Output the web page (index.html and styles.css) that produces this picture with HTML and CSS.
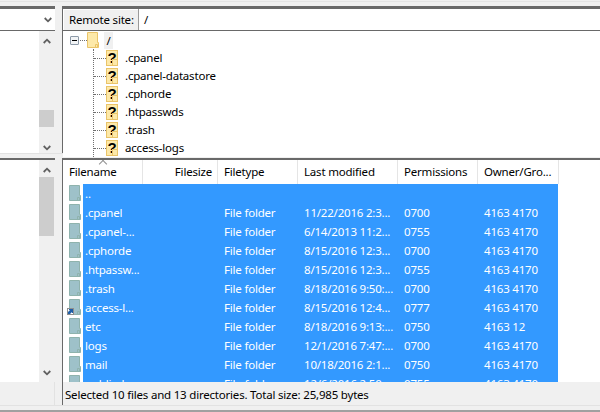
FILE: index.html
```html
<!DOCTYPE html>
<html>
<head>
<meta charset="utf-8">
<title>Remote site</title>
<link rel="stylesheet" href="styles.css">
</head>
<body>
<svg class="defs" width="0" height="0">
  <symbol id="folder" viewBox="0 0 12 16"><path d="M.5.5H10.5V10.5H11.5V15.5H.5Z" fill="#fde9a9" stroke="#eac469"/><path d="M8.5 12.5H10.5V15.5H8.5Z" fill="#fde9a9" stroke="#eac469"/></symbol>
  <symbol id="selfolder" viewBox="0 0 12 16"><path d="M.5.5H10.5V10.5H11.5V15.5H.5Z" fill="#9ec1c9" stroke="#8fb3ad"/><path d="M8.5 12.5H10.5V15.5H8.5Z" fill="#9ec1c9" stroke="#8fb3ad"/></symbol>
  <symbol id="chev" viewBox="0 0 8 6"><path d="M.7 1L4 4.3L7.3 1" fill="none" stroke="#606060" stroke-width="1.8"/></symbol>
  <symbol id="chevup" viewBox="0 0 8 6"><path d="M.7 5L4 1.7L7.3 5" fill="none" stroke="#606060" stroke-width="1.8"/></symbol>
</svg>
<div class="app">
  <div class="strip strip-top"></div>
  <div class="panes panes-top">
    <section class="left-pane">
      <div class="combo"><svg class="combo-chev"><use href="#chev"/></svg></div>
      <div class="left-body">
        <div class="blank"></div>
        <div class="scrollbar">
          <svg class="sb-arrow"><use href="#chevup"/></svg>
          <div class="track track-a"><div class="thumb thumb-a"></div></div>
          <svg class="sb-arrow"><use href="#chev"/></svg>
        </div>
      </div>
    </section>
    <section class="right-pane">
      <div class="site-bar">
        <div class="site-label">Remote site:</div>
        <div class="site-path">/</div>
      </div>
      <div class="tree">
        <div class="vline"></div>
        <div class="tree-root">
          <span class="expander"></span>
          <span class="hdots short"></span>
          <svg class="ico"><use href="#folder"/></svg>
          <span class="root-name">/</span>
        </div>
        <div class="tree-row"><span class="hdots"></span><span class="q">?</span><span class="tree-name">.cpanel</span></div>
        <div class="tree-row"><span class="hdots"></span><span class="q">?</span><span class="tree-name">.cpanel-datastore</span></div>
        <div class="tree-row"><span class="hdots"></span><span class="q">?</span><span class="tree-name">.cphorde</span></div>
        <div class="tree-row"><span class="hdots"></span><span class="q">?</span><span class="tree-name">.htpasswds</span></div>
        <div class="tree-row"><span class="hdots"></span><span class="q">?</span><span class="tree-name">.trash</span></div>
        <div class="tree-row"><span class="hdots"></span><span class="q">?</span><span class="tree-name">access-logs</span></div>
      </div>
    </section>
  </div>
  <div class="strip strip-mid"></div>
  <div class="panes panes-bottom">
    <section class="left-pane">
      <div class="left-body">
        <div class="blank"></div>
        <div class="scrollbar">
          <svg class="sb-arrow"><use href="#chevup"/></svg>
          <div class="track track-b"><div class="thumb thumb-b"></div></div>
          <svg class="sb-arrow"><use href="#chev"/></svg>
        </div>
      </div>
      <div class="left-status"></div>
    </section>
    <section class="right-pane">
      <div class="list">
        <div class="row head">
          <span class="c-name">Filename<i class="sort"></i></span>
          <span class="c-size">Filesize</span>
          <span class="c-type">Filetype</span>
          <span class="c-date">Last modified</span>
          <span class="c-perm">Permissions</span>
          <span class="c-own">Owner/Gro...</span>
        </div>
        <div class="rows">
          <div class="row"><svg class="ico"><use href="#selfolder"/></svg><div class="sel"><span class="s-name">..</span><span class="s-size"></span><span class="s-type"></span><span class="s-date"></span><span class="s-perm"></span><span class="s-own"></span></div></div>
          <div class="row"><svg class="ico"><use href="#selfolder"/></svg><div class="sel"><span class="s-name">.cpanel</span><span class="s-size"></span><span class="s-type">File folder</span><span class="s-date">11/22/2016 2:3...</span><span class="s-perm">0700</span><span class="s-own">4163 4170</span></div></div>
          <div class="row"><svg class="ico"><use href="#selfolder"/></svg><div class="sel"><span class="s-name">.cpanel-...</span><span class="s-size"></span><span class="s-type">File folder</span><span class="s-date">6/14/2013 11:2...</span><span class="s-perm">0755</span><span class="s-own">4163 4170</span></div></div>
          <div class="row"><svg class="ico"><use href="#selfolder"/></svg><div class="sel"><span class="s-name">.cphorde</span><span class="s-size"></span><span class="s-type">File folder</span><span class="s-date">8/15/2016 12:3...</span><span class="s-perm">0700</span><span class="s-own">4163 4170</span></div></div>
          <div class="row"><svg class="ico"><use href="#selfolder"/></svg><div class="sel"><span class="s-name">.htpassw...</span><span class="s-size"></span><span class="s-type">File folder</span><span class="s-date">8/15/2016 12:3...</span><span class="s-perm">0755</span><span class="s-own">4163 4170</span></div></div>
          <div class="row"><svg class="ico"><use href="#selfolder"/></svg><div class="sel"><span class="s-name">.trash</span><span class="s-size"></span><span class="s-type">File folder</span><span class="s-date">8/18/2016 9:50:...</span><span class="s-perm">0700</span><span class="s-own">4163 4170</span></div></div>
          <div class="row"><svg class="ico"><use href="#selfolder"/></svg><span class="link-badge"><svg class="link-arrow" viewBox="0 0 5 5"><path d="M0 5V3L2 1H1V0H5V4H4V3L2 5Z" fill="#1f5fa8"/></svg></span><div class="sel"><span class="s-name">access-l...</span><span class="s-size"></span><span class="s-type">File folder</span><span class="s-date">8/15/2016 12:4...</span><span class="s-perm">0777</span><span class="s-own">4163 4170</span></div></div>
          <div class="row"><svg class="ico"><use href="#selfolder"/></svg><div class="sel"><span class="s-name">etc</span><span class="s-size"></span><span class="s-type">File folder</span><span class="s-date">8/18/2016 9:13:...</span><span class="s-perm">0750</span><span class="s-own">4163 12</span></div></div>
          <div class="row"><svg class="ico"><use href="#selfolder"/></svg><div class="sel"><span class="s-name">logs</span><span class="s-size"></span><span class="s-type">File folder</span><span class="s-date">12/1/2016 7:47:...</span><span class="s-perm">0700</span><span class="s-own">4163 4170</span></div></div>
          <div class="row"><svg class="ico"><use href="#selfolder"/></svg><div class="sel"><span class="s-name">mail</span><span class="s-size"></span><span class="s-type">File folder</span><span class="s-date">10/18/2016 2:1...</span><span class="s-perm">0750</span><span class="s-own">4163 4170</span></div></div>
          <div class="row"><svg class="ico"><use href="#selfolder"/></svg><div class="sel"><span class="s-name">public_h...</span><span class="s-size"></span><span class="s-type">File folder</span><span class="s-date">12/6/2016 2:50...</span><span class="s-perm">0755</span><span class="s-own">4163 4170</span></div></div>
        </div>
      </div>
      <div class="status">Selected 10 files and 13 directories. Total size: 25,985 bytes</div>
    </section>
  </div>
  <div class="strip-bottom"></div>
</div>
</body>
</html>
```
FILE: styles.css
```css
* { box-sizing: border-box; }
html, body { margin: 0; padding: 0; }
body { width: 600px; height: 412px; overflow: hidden; background: #f0f0f0; font: 11.5px/16px "Noto Sans", sans-serif; letter-spacing: -0.2px; color: #000; }
.defs { display: block; height: 0; }
.app { display: flex; flex-direction: column; height: 412px; }
.strip { flex: none; }
.strip-top { height: 6px; background: #f0f0f0; box-shadow: inset 0 -4px 0 #f0f0f0, inset 0 -5px 0 #e4e4e4; }
.panes { display: grid; grid-template-columns: 55px 1fr; column-gap: 7px; flex: none; }
.panes-top { height: 147px; }
.panes-top > section { border-top: 3px solid #696969; }
.strip-mid { height: 5px; background: #f0f0f0; border-top: 1px solid #e2e2e2; }
.panes-bottom { height: 247px; }
.panes-bottom > section { border-top: 2px solid #696969; }
.left-pane { display: flex; flex-direction: column; min-width: 0; }
.combo { height: 22px; background: #fff; border-bottom: 1px solid #696969; display: flex; align-items: center; justify-content: flex-end; padding-right: 3px; flex: none; }
.combo-chev { width: 8px; height: 6px; }
.left-body { flex: 1; display: flex; min-height: 0; }
.blank { flex: 1; background: #fff; }
.scrollbar { width: 16px; display: flex; flex-direction: column; align-items: center; background: #f0f0f0; }
.sb-arrow { width: 8px; height: 6px; flex: none; }
.scrollbar .sb-arrow:first-child { margin: 7px 0 4px; }
.scrollbar .sb-arrow:last-child { margin: 5px 0 6px; }
.track { flex: 1; width: 100%; min-height: 0; }
.track-a { padding-top: 62px; }
.thumb { width: 15px; background: #cdcdcd; }
.thumb-a { height: 17px; }
.thumb-b { height: 59px; }
.left-status { height: 23px; border-right: 1px solid #e2e2e2; flex: none; }
.right-pane { display: flex; flex-direction: column; min-width: 0; background: #fff; border-left: 1px solid #696969; }
.site-bar { display: flex; height: 22px; border-bottom: 1px solid #696969; flex: none; }
.site-label { width: 76px; background: #f0f0f0; border-right: 1px solid #9a9a9a; padding: 3px 0 0 6px; white-space: nowrap; box-shadow: inset 1px 1px 0 #fff; flex: none; }
.site-path { padding: 3px 0 0 5px; }
.tree { position: relative; flex: 1; min-height: 0; overflow: hidden; background: #fff; }
.vline { position: absolute; left: 30px; top: 18px; bottom: 0; border-left: 1px dotted #6f6f6f; }
.tree-root { display: flex; align-items: center; height: 18px; padding-left: 7px; }
.expander { width: 9px; height: 9px; border: 1px solid #8d9aa8; background: linear-gradient(#000 0 0) center/5px 1px no-repeat #f2f4f6; flex: none; border-radius: 1px; }
.hdots { border-top: 1px dotted #6f6f6f; height: 1px; flex: none; width: 12px; }
.hdots.short { width: 7px; margin-left: 1px; }
.ico { width: 12px; height: 16px; flex: none; display: block; }
.root-name { margin-left: 5px; width: 9px; height: 17px; background: #f0f0f0; text-align: center; line-height: 17px; }
.tree-row { display: flex; align-items: center; height: 18px; padding-left: 31px; }
.tree-name { margin-left: 7px; }
.q { width: 12px; height: 16px; flex: none; position: relative; background: #fde9a9; border: 1px solid #eac469; font: bold 15px/14px "Liberation Sans", sans-serif; letter-spacing: 0; text-align: center; }
.q::after { content: ""; position: absolute; right: -1px; bottom: -1px; width: 4px; height: 5px; background: #fde9a9; border: 1px solid #eac469; }
.list { height: 222px; flex: none; overflow: hidden; background: #fff; }
.row { display: flex; align-items: center; height: 19px; width: 495px; position: relative; padding-left: 6px; }
.head { height: 24px; padding-left: 0; align-items: stretch; background: #fff; width: 496px; }
.head span { display: flex; align-items: center; border-right: 1px solid #e5e5e5; padding: 0 0 0 6px; flex: none; height: 24px; position: relative; }
.c-name { width: 80px; }
.c-size { width: 75px; justify-content: flex-end; padding-right: 5px !important; }
.c-type { width: 80px; }
.c-date { width: 100px; }
.c-perm { width: 80px; }
.c-own { width: 81px; }
.sort { position: absolute; left: 36px; top: 0; width: 8px; height: 4px; }
.sort::before { content: ""; position: absolute; left: 1px; top: 1px; width: 5px; height: 5px; border-left: 1px solid #909090; border-top: 1px solid #909090; transform: rotate(45deg); }
.rows { height: 198px; overflow: hidden; }
.rows .ico { margin-top: -1px; }
.sel { display: flex; align-items: center; height: 19px; background: #3399ff; color: #fff; margin-left: 2px; flex: 1; min-width: 0; }
.sel span { display: block; flex: none; white-space: nowrap; }
.s-name { width: 60px; padding-left: 2px; }
.s-size { width: 75px; }
.s-type { width: 80px; padding-left: 6px; }
.s-date { width: 100px; padding-left: 6px; }
.s-perm { width: 80px; padding-left: 6px; }
.s-own { width: 80px; padding-left: 6px; }
.link-badge { position: absolute; left: 4px; top: 10px; width: 7px; height: 7px; background: #fff; border: 1px solid #8f8f8f; display: flex; }
.link-arrow { width: 5px; height: 5px; display: block; }
.status { flex: 1; background: #f0f0f0; padding: 5px 0 0 2px; white-space: nowrap; }
.strip-bottom { flex: 1; background: #f0f0f0; border-top: 1px solid #e2e2e2; border-bottom: 2px solid #a0a0a0; }
```
